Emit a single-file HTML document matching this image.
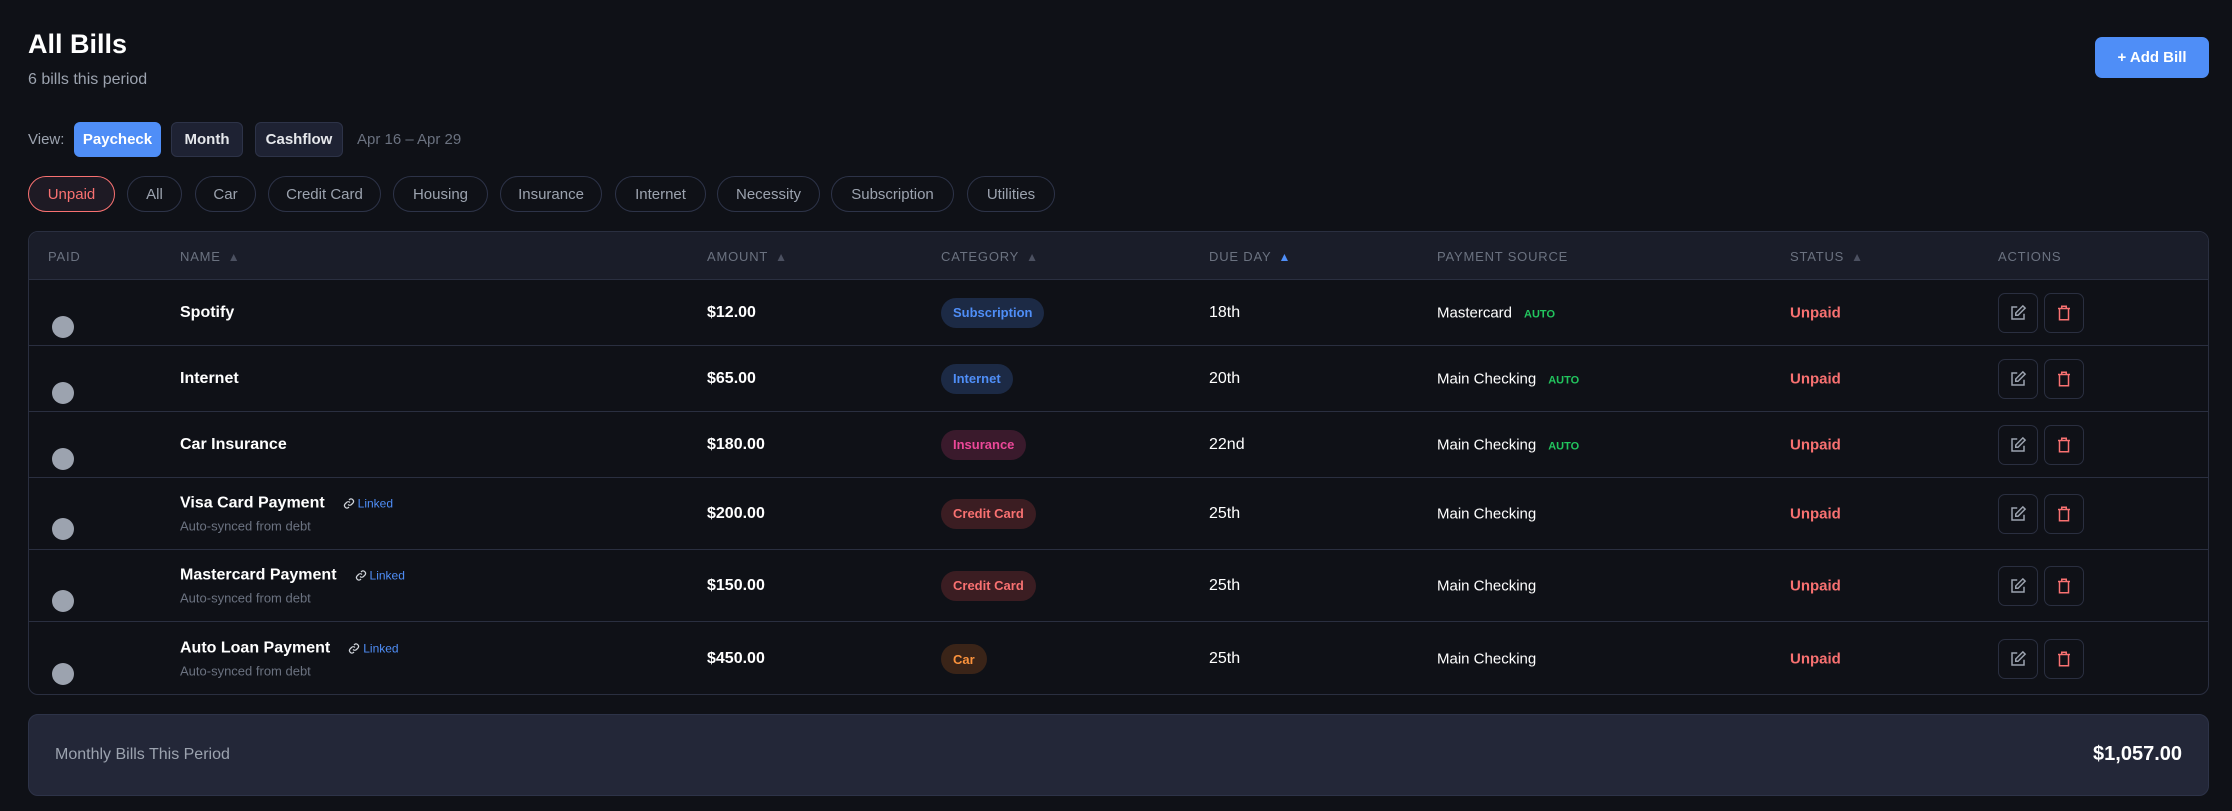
<!DOCTYPE html>
<html><head><meta charset="utf-8"><style>
*{box-sizing:border-box;margin:0;padding:0}
body{width:2232px;height:811px;background:#0f1117;font-family:"Liberation Sans",sans-serif;color:#f3f4f6;position:relative;overflow:hidden}
.abs{position:absolute}
h1{position:absolute;left:28px;top:29px;font-size:27px;font-weight:700;color:#fff}
.sub{left:28px;top:71px;font-size:16px;color:#9ca3af}
.add{left:2095px;top:37px;width:114px;height:41px;background:#4f8ef7;border-radius:7px;color:#fff;font-weight:700;font-size:15px;display:flex;align-items:center;justify-content:center}
.vbtn{top:122px;height:35px;border-radius:6px;display:flex;align-items:center;justify-content:center;font-size:15px;font-weight:700;background:#1e2233;border:1px solid #2d3348;color:#e5e7eb}
.pill{top:176px;height:36px;border-radius:18px;border:1px solid #2d3348;display:flex;align-items:center;justify-content:center;font-size:15px;color:#9ca3af;background:#0f1117}
.tbl{left:28px;top:231px;width:2181px;height:464px;border:1px solid #2a2f40;border-radius:10px;overflow:hidden}
.hdr{position:absolute;left:0;top:0;width:100%;height:48px;background:#1a1d29;border-bottom:1px solid #2a2f40}
.h{position:absolute;top:17px;font-size:13px;letter-spacing:0.8px;color:#6b7280}
.h .ar{color:#4b5060;font-size:12px;margin-left:7px}
.row{position:absolute;left:0;width:100%;border-bottom:1px solid #2a2f40}
.c{position:absolute;top:50%;transform:translateY(-50%)}
.rad{position:absolute;left:23px;width:22px;height:22px;border-radius:50%;background:#9ca3af}
.nm{font-size:16px;font-weight:700;color:#fff;left:151px}
.am{font-size:16px;font-weight:700;color:#fff;left:678px}
.cat{left:912px;height:30px;border-radius:15px;padding:0 12px;font-size:13px;font-weight:700;display:flex;align-items:center}
.dd{left:1180px;font-size:16px;color:#fff}
.ps{left:1408px;font-size:15px;color:#fff}
.auto{color:#22c55e;font-size:11px;font-weight:700;margin-left:12px}
.st{left:1761px;font-size:15px;font-weight:700;color:#f87171}
.ab{position:absolute;width:40px;height:40px;border:1px solid #2a2f40;border-radius:7px;top:50%;transform:translateY(-50%);display:flex;align-items:center;justify-content:center}
.lk{color:#4f8ef7;font-size:12px;font-weight:400;margin-left:18px}
.lk svg{vertical-align:-2px;margin-right:3px}
.sy{font-size:13px;color:#6b7280;font-weight:400;display:block;margin-top:6px}
.sum{left:28px;top:714px;width:2181px;height:82px;background:#232738;border:1px solid #2d3348;border-radius:10px}
</style></head><body>
<h1>All Bills</h1>
<div class="abs sub">6 bills this period</div>
<div class="abs add">+ Add Bill</div>
<div class="abs" style="left:28px;top:131px;font-size:15px;color:#9ca3af">View:</div>
<div class="abs vbtn" style="left:74px;width:87px;background:#4f8ef7;border-color:#4f8ef7;color:#fff">Paycheck</div>
<div class="abs vbtn" style="left:171px;width:72px">Month</div>
<div class="abs vbtn" style="left:255px;width:88px">Cashflow</div>
<div class="abs" style="left:357px;top:131px;font-size:15px;color:#6b7280">Apr 16 – Apr 29</div>
<div class="abs pill" style="left:28px;width:87px;border-color:#f87171;color:#f87171;background:#1e1a24">Unpaid</div>
<div class="abs pill" style="left:127px;width:55px">All</div>
<div class="abs pill" style="left:195px;width:61px">Car</div>
<div class="abs pill" style="left:268px;width:113px">Credit Card</div>
<div class="abs pill" style="left:393px;width:95px">Housing</div>
<div class="abs pill" style="left:500px;width:102px">Insurance</div>
<div class="abs pill" style="left:615px;width:91px">Internet</div>
<div class="abs pill" style="left:717px;width:103px">Necessity</div>
<div class="abs pill" style="left:831px;width:123px">Subscription</div>
<div class="abs pill" style="left:967px;width:88px">Utilities</div>
<div class="abs tbl">
<div class="hdr">
<div class="h" style="left:19px">PAID</div>
<div class="h" style="left:151px">NAME<span class="ar">▲</span></div>
<div class="h" style="left:678px">AMOUNT<span class="ar">▲</span></div>
<div class="h" style="left:912px">CATEGORY<span class="ar">▲</span></div>
<div class="h" style="left:1180px">DUE DAY<span class="ar" style="color:#4f8ef7">▲</span></div>
<div class="h" style="left:1408px">PAYMENT SOURCE</div>
<div class="h" style="left:1761px">STATUS<span class="ar">▲</span></div>
<div class="h" style="left:1969px">ACTIONS</div>
</div>
<div class="row" style="top:48px;height:66px"><div class="rad" style="top:36px"></div><div class="c nm">Spotify</div><div class="c am">$12.00</div><div class="c cat" style="background:#1c2a45;color:#4f8ef7">Subscription</div><div class="c dd">18th</div><div class="c ps">Mastercard<span class="auto">AUTO</span></div><div class="c st">Unpaid</div>
<div class="ab" style="left:1969px"><svg width="18" height="18" viewBox="0 0 24 24" fill="none" stroke="#9ca3af" stroke-width="2"><path d="M11 4H4v16h16v-7"/><path d="M18.5 2.5l3 3L12 15H9v-3z"/></svg></div><div class="ab" style="left:2015px"><svg width="18" height="18" viewBox="0 0 24 24" fill="none" stroke="#f87171" stroke-width="2"><path d="M4 6h16M9 6V3h6v3M6 6v15h12V6"/></svg></div></div>
<div class="row" style="top:114px;height:66px"><div class="rad" style="top:36px"></div><div class="c nm">Internet</div><div class="c am">$65.00</div><div class="c cat" style="background:#1c2a45;color:#4f8ef7">Internet</div><div class="c dd">20th</div><div class="c ps">Main Checking<span class="auto">AUTO</span></div><div class="c st">Unpaid</div>
<div class="ab" style="left:1969px"><svg width="18" height="18" viewBox="0 0 24 24" fill="none" stroke="#9ca3af" stroke-width="2"><path d="M11 4H4v16h16v-7"/><path d="M18.5 2.5l3 3L12 15H9v-3z"/></svg></div><div class="ab" style="left:2015px"><svg width="18" height="18" viewBox="0 0 24 24" fill="none" stroke="#f87171" stroke-width="2"><path d="M4 6h16M9 6V3h6v3M6 6v15h12V6"/></svg></div></div>
<div class="row" style="top:180px;height:66px"><div class="rad" style="top:36px"></div><div class="c nm">Car Insurance</div><div class="c am">$180.00</div><div class="c cat" style="background:#3a1a2c;color:#ec4899">Insurance</div><div class="c dd">22nd</div><div class="c ps">Main Checking<span class="auto">AUTO</span></div><div class="c st">Unpaid</div>
<div class="ab" style="left:1969px"><svg width="18" height="18" viewBox="0 0 24 24" fill="none" stroke="#9ca3af" stroke-width="2"><path d="M11 4H4v16h16v-7"/><path d="M18.5 2.5l3 3L12 15H9v-3z"/></svg></div><div class="ab" style="left:2015px"><svg width="18" height="18" viewBox="0 0 24 24" fill="none" stroke="#f87171" stroke-width="2"><path d="M4 6h16M9 6V3h6v3M6 6v15h12V6"/></svg></div></div>
<div class="row" style="top:246px;height:72px"><div class="rad" style="top:40px"></div><div class="c nm">Visa Card Payment<span class="lk"><svg width="12" height="12" viewBox="0 0 24 24" fill="none" stroke="#d1d5db" stroke-width="2.5"><path d="M10 14a5 5 0 0 0 7 0l3-3a5 5 0 0 0-7-7l-1 1"/><path d="M14 10a5 5 0 0 0-7 0l-3 3a5 5 0 0 0 7 7l1-1"/></svg>Linked</span><span class="sy">Auto-synced from debt</span></div><div class="c am">$200.00</div><div class="c cat" style="background:#3b1d22;color:#f87171">Credit Card</div><div class="c dd">25th</div><div class="c ps">Main Checking</div><div class="c st">Unpaid</div>
<div class="ab" style="left:1969px"><svg width="18" height="18" viewBox="0 0 24 24" fill="none" stroke="#9ca3af" stroke-width="2"><path d="M11 4H4v16h16v-7"/><path d="M18.5 2.5l3 3L12 15H9v-3z"/></svg></div><div class="ab" style="left:2015px"><svg width="18" height="18" viewBox="0 0 24 24" fill="none" stroke="#f87171" stroke-width="2"><path d="M4 6h16M9 6V3h6v3M6 6v15h12V6"/></svg></div></div>
<div class="row" style="top:318px;height:72px"><div class="rad" style="top:40px"></div><div class="c nm">Mastercard Payment<span class="lk"><svg width="12" height="12" viewBox="0 0 24 24" fill="none" stroke="#d1d5db" stroke-width="2.5"><path d="M10 14a5 5 0 0 0 7 0l3-3a5 5 0 0 0-7-7l-1 1"/><path d="M14 10a5 5 0 0 0-7 0l-3 3a5 5 0 0 0 7 7l1-1"/></svg>Linked</span><span class="sy">Auto-synced from debt</span></div><div class="c am">$150.00</div><div class="c cat" style="background:#3b1d22;color:#f87171">Credit Card</div><div class="c dd">25th</div><div class="c ps">Main Checking</div><div class="c st">Unpaid</div>
<div class="ab" style="left:1969px"><svg width="18" height="18" viewBox="0 0 24 24" fill="none" stroke="#9ca3af" stroke-width="2"><path d="M11 4H4v16h16v-7"/><path d="M18.5 2.5l3 3L12 15H9v-3z"/></svg></div><div class="ab" style="left:2015px"><svg width="18" height="18" viewBox="0 0 24 24" fill="none" stroke="#f87171" stroke-width="2"><path d="M4 6h16M9 6V3h6v3M6 6v15h12V6"/></svg></div></div>
<div class="row" style="top:390px;height:74px;border-bottom:none"><div class="rad" style="top:41px"></div><div class="c nm">Auto Loan Payment<span class="lk"><svg width="12" height="12" viewBox="0 0 24 24" fill="none" stroke="#d1d5db" stroke-width="2.5"><path d="M10 14a5 5 0 0 0 7 0l3-3a5 5 0 0 0-7-7l-1 1"/><path d="M14 10a5 5 0 0 0-7 0l-3 3a5 5 0 0 0 7 7l1-1"/></svg>Linked</span><span class="sy">Auto-synced from debt</span></div><div class="c am">$450.00</div><div class="c cat" style="background:#3a2418;color:#fb923c">Car</div><div class="c dd">25th</div><div class="c ps">Main Checking</div><div class="c st">Unpaid</div>
<div class="ab" style="left:1969px"><svg width="18" height="18" viewBox="0 0 24 24" fill="none" stroke="#9ca3af" stroke-width="2"><path d="M11 4H4v16h16v-7"/><path d="M18.5 2.5l3 3L12 15H9v-3z"/></svg></div><div class="ab" style="left:2015px"><svg width="18" height="18" viewBox="0 0 24 24" fill="none" stroke="#f87171" stroke-width="2"><path d="M4 6h16M9 6V3h6v3M6 6v15h12V6"/></svg></div></div>
</div>
<div class="abs sum"><div class="abs" style="left:26px;top:31px;font-size:16px;color:#9ca3af">Monthly Bills This Period</div><div class="abs" style="right:26px;top:28px;font-size:20px;font-weight:700;color:#fff">$1,057.00</div></div>
</body></html>
